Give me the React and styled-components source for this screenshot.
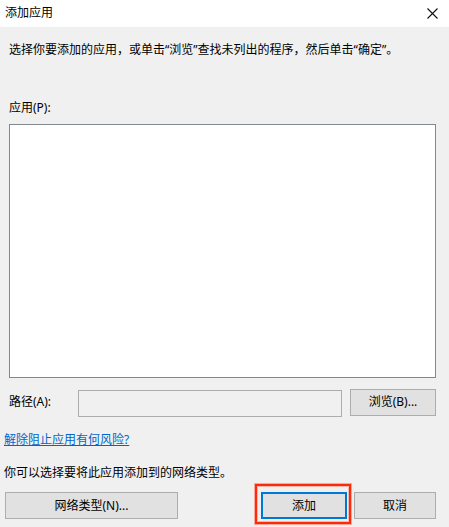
import React from "react";
import styled, { createGlobalStyle } from "styled-components";

const Global = createGlobalStyle`
  html, body { margin: 0; padding: 0; background: #f0f0f0; }
  body { font-family: "Noto Sans", "Noto Sans CJK SC", "Microsoft YaHei", sans-serif; font-size: 12px; color: #000; }
`;

const Window = styled.div`
  width: 449px;
  height: 527px;
  background: #f0f0f0;
  display: flex;
  flex-direction: column;
  overflow: hidden;
`;

const TitleBar = styled.div`
  height: 27px;
  background: #fff;
  display: flex;
  align-items: center;
  justify-content: space-between;
  padding: 0 11px 0 5px;
  box-sizing: border-box;
`;

const Title = styled.span`
  font-size: 12px;
  line-height: 16px;
  margin-top: -1px;
`;

const Text = styled.div`
  font-size: 12px;
  line-height: 16px;
  padding-left: ${(p) => p.$left}px;
  margin-top: ${(p) => p.$top}px;
  white-space: nowrap;
`;

const Link = styled.a`
  font-size: 12px;
  line-height: 16px;
  color: #0066cc;
  text-decoration: underline;
  margin: 16px 0 0 4px;
  align-self: flex-start;
  cursor: pointer;
`;

const ListBox = styled.div`
  margin: 8px 13px 0 9px;
  height: 254px;
  box-sizing: border-box;
  background: #fff;
  border: 1px solid #828790;
`;

const PathRow = styled.div`
  display: flex;
  align-items: center;
  margin: 10px 13px 0 9px;
  height: 28px;
`;

const PathLabel = styled.span`
  width: 69px;
  line-height: 16px;
`;

const PathInput = styled.div`
  width: 264px;
  height: 27px;
  box-sizing: border-box;
  border: 1px solid #adadad;
  background: #f0f0f0;
  margin-top: 2px;
`;

const Button = styled.div`
  width: ${(p) => p.$w}px;
  height: 27px;
  box-sizing: border-box;
  background: #e1e1e1;
  border: ${(p) => (p.$default ? "2px solid #0078d7" : "1px solid #adadad")};
  display: flex;
  align-items: center;
  justify-content: center;
  font-size: 12px;
  line-height: 16px;
  margin-left: ${(p) => p.$ml || 0}px;
  position: relative;
`;

const ButtonRow = styled.div`
  display: flex;
  margin: 11px 0 0 5px;
`;

const Highlight = styled.div`
  position: absolute;
  left: -8px;
  top: -10px;
  right: -6px;
  bottom: -7px;
  border: 2px solid #ff2a0a;
  box-shadow: 0 0 0 1px rgba(255, 80, 50, 0.45), inset 0 0 0 1px rgba(255, 80, 50, 0.35);
  pointer-events: none;
`;

const CloseIcon = () => (
  <svg width="11" height="11" viewBox="0 0 11 11">
    <path d="M0.5 0.5 L10.5 10.5 M10.5 0.5 L0.5 10.5" stroke="#111" strokeWidth="1.1" fill="none" />
  </svg>
);

export default function App() {
  return (
    <>
      <Global />
      <Window>
        <TitleBar>
          <Title>添加应用</Title>
          <CloseIcon />
        </TitleBar>
        <Text $left={9} $top={15}>
          选择你要添加的应用，或单击“浏览”查找未列出的程序，然后单击“确定”。
        </Text>
        <Text $left={9} $top={42}>应用(P):</Text>
        <ListBox />
        <PathRow>
          <PathLabel>路径(A):</PathLabel>
          <PathInput />
          <Button $w={86} $ml={8}>浏览(B)...</Button>
        </PathRow>
        <Link>解除阻止应用有何风险?</Link>
        <Text $left={4} $top={17}>你可以选择要将此应用添加到的网络类型。</Text>
        <ButtonRow>
          <Button $w={173}>网络类型(N)...</Button>
          <Button $w={86} $ml={83} $default>
            添加
            <Highlight />
          </Button>
          <Button $w={82} $ml={7}>取消</Button>
        </ButtonRow>
      </Window>
    </>
  );
}
